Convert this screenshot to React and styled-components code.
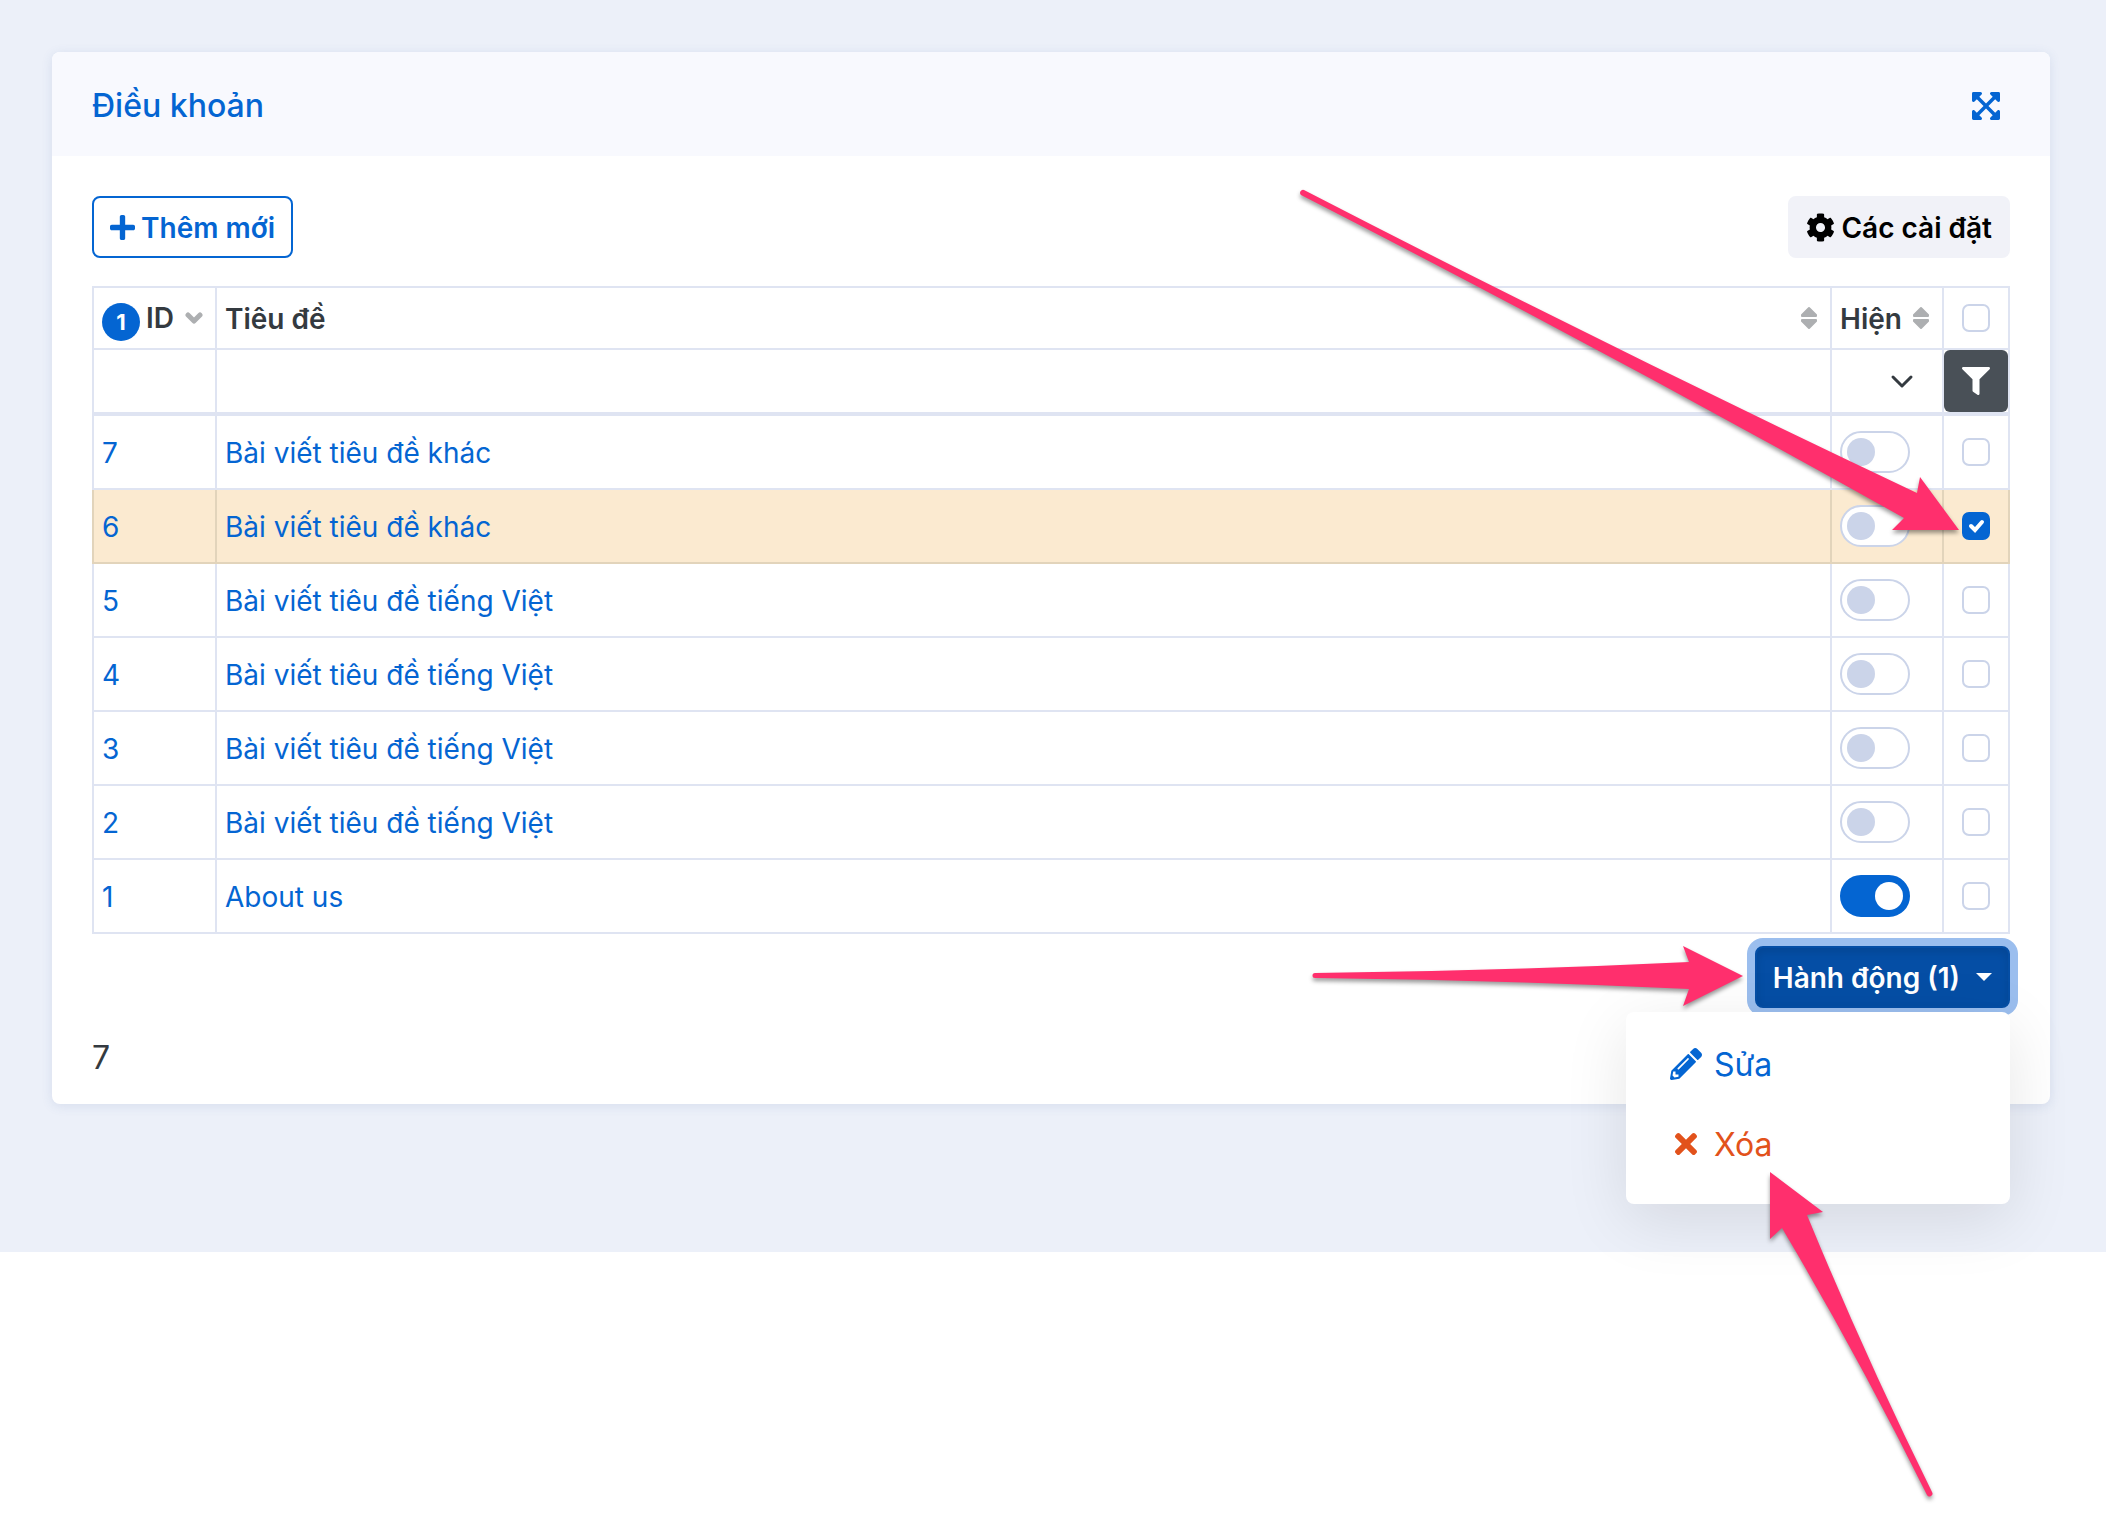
import { useState } from 'react'
import styled, { createGlobalStyle, css } from 'styled-components'
import { FaCog, FaExpandArrowsAlt, FaFilter, FaPencilAlt, FaPlus, FaTimes } from 'react-icons/fa'

const BLUE = '#0465d2'
const LINE = '#dfe4f2'
const CONTROL_LINE = '#cbd4e9'
const TEXT = '#343a40'

const articles = [
    { id: 7, title: 'Bài viết tiêu đề khác', visible: false },
    { id: 6, title: 'Bài viết tiêu đề khác', visible: false },
    { id: 5, title: 'Bài viết tiêu đề tiếng Việt', visible: false },
    { id: 4, title: 'Bài viết tiêu đề tiếng Việt', visible: false },
    { id: 3, title: 'Bài viết tiêu đề tiếng Việt', visible: false },
    { id: 2, title: 'Bài viết tiêu đề tiếng Việt', visible: false },
    { id: 1, title: 'About us', visible: true },
]

const GlobalStyle = createGlobalStyle`
    *, *::before, *::after {
        box-sizing: border-box;
    }

    body {
        margin: 0;
        background: #fff;
        color: ${TEXT};
        font: 400 32px/48px Inter, sans-serif;
    }

    button, input, select {
        font: inherit;
        color: inherit;
    }
`

const Page = styled.div`
    position: relative;
    min-height: 100vh;
`

const Main = styled.main`
    padding: 52px 56px 148px 52px;
    background: #ecf0f9;
`

const Card = styled.section`
    border-radius: 8px;
    background: #fff;
    box-shadow: 0 2px 12px rgba(60, 90, 160, .12);
`

const CardHeader = styled.header`
    display: flex;
    align-items: center;
    justify-content: space-between;
    height: 104px;
    padding: 4px 40px 0;
    border-radius: 8px 8px 0 0;
    background: #f8f9fe;
    color: ${BLUE};
`

const Title = styled.h1`
    margin: 0;
    font-size: 32px;
    font-weight: 500;
`

const IconButton = styled.button`
    display: flex;
    padding: 0 10px;
    border: 0;
    background: none;
    color: ${BLUE};
    cursor: pointer;

    svg {
        width: 28px;
        height: 32px;
    }
`

const CardBody = styled.div`
    padding: 40px 40px 22px;
`

const Toolbar = styled.div`
    display: flex;
    justify-content: space-between;
    margin-bottom: 28px;
`

/* Inter sits a little high in its line box, this centres the caps */
const Label = styled.span`
    display: inline-block;
    padding-top: 2px;
`

const variants = {
    outline: css`
        border-color: ${BLUE};
        background: #fff;
        color: ${BLUE};
    `,
    light: css`
        border-color: #f1f2f8;
        background: #f1f2f8;
        color: #000;
    `,
    active: css`
        border-color: #054ea5;
        background: #054ea5;
        color: #fff;
        box-shadow: inset 0 4px 8px rgba(0, 0, 0, .1), 0 0 0 8px #9bbeee;
    `,
}

const Button = styled.button`
    display: flex;
    align-items: center;
    gap: ${({ $gap }) => $gap ?? 6}px;
    height: 62px;
    padding: 0 16px;
    border: 2px solid;
    border-radius: 8px;
    font-size: 28px;
    font-weight: 600;
    line-height: 44px;
    white-space: nowrap;
    cursor: pointer;
    ${({ $variant }) => variants[$variant]}
`

const PlusIcon = styled(FaPlus)`
    width: 25px;
    height: 29px;
`

const Table = styled.table`
    width: 100%;
    table-layout: fixed;
    border-spacing: 0;
    border-top: 2px solid ${LINE};
    font-size: 28px;
    line-height: 44px;
`

const Col = styled.col`
    width: ${({ $width }) => $width}px;
`

const cell = css`
    padding: 0 8px;
    border: solid ${LINE};
    border-width: 0 2px 2px 0;
    text-align: left;

    &:first-child {
        border-left-width: 2px;
    }
`

const HeadCell = styled.th`
    ${cell}
    height: 62px;
    font-weight: 600;
`

const FilterCell = styled.td`
    ${cell}
    position: relative;
    height: 66px;
    padding: 0;
    border-bottom-width: 4px;
`

const Row = styled.tr`
    background: ${({ $selected }) => $selected ? '#fbead0' : '#fff'};

    td {
        border-color: ${({ $selected }) => $selected ? '#e2d4bb' : LINE};
    }
`

const Cell = styled.td`
    ${cell}
    height: 74px;
`

const HeadInner = styled.div`
    display: flex;
    align-items: center;
    justify-content: ${({ $center }) => $center ? 'center' : 'space-between'};
    padding-right: ${({ $center }) => $center ? 0 : 4}px;
`

const SortLabel = styled.span`
    display: flex;
    align-items: center;
    gap: 6px;
`

const Badge = styled.span`
    width: 38px;
    height: 38px;
    margin-top: 8px;
    border-radius: 50%;
    background: ${BLUE};
    color: #fff;
    font-size: 22px;
    font-weight: 700;
    line-height: 38px;
    text-align: center;
`

const FilterInput = styled.input`
    display: block;
    width: 100%;
    height: 62px;
    padding: 0 8px;
    border: 0;
    background: none;
`

const FilterSelect = styled.select`
    display: block;
    width: 100%;
    height: 62px;
    padding: 0 8px;
    border: 0;
    background: none;
    appearance: none;
`

const SelectArrow = styled.svg`
    position: absolute;
    top: 23px;
    right: 28px;
    pointer-events: none;
`

const FilterButton = styled.button`
    display: flex;
    align-items: center;
    justify-content: center;
    width: 100%;
    height: 62px;
    padding: 0;
    border: 0;
    border-radius: 6px;
    background: #495057;
    color: #fff;
    font-size: 28px;
    cursor: pointer;
`

const Link = styled.a`
    display: inline-block;
    padding-top: 2px;
    color: ${BLUE};
    text-decoration: none;
`

const CenterBox = styled.div`
    display: flex;
    justify-content: center;
`

const Checkbox = styled.input.attrs({ type: 'checkbox' })`
    width: 28px;
    height: 28px;
    margin: 0;
    border: 2px solid ${CONTROL_LINE};
    border-radius: 7px;
    background: #fff;
    appearance: none;
    cursor: pointer;

    &:checked {
        border-color: ${BLUE};
        background: ${BLUE} url("data:image/svg+xml,%3Csvg xmlns='http://www.w3.org/2000/svg' viewBox='0 0 24 24'%3E%3Cpath d='M7 12l4 4 7-8' fill='none' stroke='%23fff' stroke-width='4' stroke-linecap='round'/%3E%3C/svg%3E") center / 24px no-repeat;
    }
`

const Switch = styled.input.attrs({ type: 'checkbox', role: 'switch' })`
    display: block;
    width: 70px;
    height: 42px;
    margin: 0;
    padding: 5px;
    border: 2px solid ${CONTROL_LINE};
    border-radius: 21px;
    background: #fff;
    appearance: none;
    cursor: pointer;

    &::before {
        content: '';
        display: block;
        width: 28px;
        height: 28px;
        border-radius: 50%;
        background: ${CONTROL_LINE};
    }

    &:checked {
        border-color: ${BLUE};
        background: ${BLUE};
    }

    &:checked::before {
        margin-left: 28px;
        background: #fff;
    }
`

const Actions = styled.div`
    display: flex;
    justify-content: flex-end;
    margin: 12px 0 24px;
`

const Dropdown = styled.div`
    position: relative;
`

const Menu = styled.div`
    position: absolute;
    z-index: 1;
    top: 100%;
    right: 0;
    width: 384px;
    margin-top: 4px;
    padding: 12px 0 20px;
    border-radius: 8px;
    background: #fff;
    box-shadow: 0 16px 64px rgba(0, 0, 0, .1);
`

const MenuItem = styled.button`
    display: flex;
    align-items: center;
    gap: 8px;
    width: 100%;
    height: 80px;
    padding: 0 40px;
    border: 0;
    background: none;
    color: ${({ $danger }) => $danger ? '#e2521b' : BLUE};
    cursor: pointer;

    svg {
        width: 40px;
        height: 32px;
    }
`

const Total = styled.div`
    padding-top: 2px;
`

const Arrows = styled.svg`
    position: absolute;
    z-index: 2;
    top: 0;
    right: 0;
    pointer-events: none;
    filter: drop-shadow(0 3px 2px rgba(0, 0, 0, .4));
`

const SortIcon = () => (
    <svg width="18" height="24" viewBox="0 0 18 24" fill="#adafb1" stroke="#adafb1" strokeWidth="2" strokeLinejoin="round">
        <path d="M9 2 L16 9 V10 H2 V9 Z" />
        <path d="M9 22 L16 15 V14 H2 V15 Z" />
    </svg>
)

const SortDownIcon = () => (
    <svg width="18" height="24" viewBox="0 0 18 24" fill="none" stroke="#adafb1" strokeWidth="5" strokeLinecap="round" strokeLinejoin="round">
        <path d="M3 9 L9 15 L15 9" />
    </svg>
)

const App = () => {
    const [selected, setSelected] = useState([6])
    const [visible, setVisible] = useState(articles.filter(a => a.visible).map(a => a.id))
    const [menuOpen, setMenuOpen] = useState(true)

    const toggle = (list, setList, id) => {
        setList(list.includes(id) ? list.filter(x => x !== id) : [...list, id])
    }

    const allSelected = selected.length === articles.length

    return (
        <Page>
            <GlobalStyle />
            <Main>
                <Card>
                    <CardHeader>
                        <Title>Điều khoản</Title>
                        <IconButton aria-label="Toàn màn hình"><FaExpandArrowsAlt /></IconButton>
                    </CardHeader>
                    <CardBody>
                        <Toolbar>
                            <Button $variant="outline"><PlusIcon /><Label>Thêm mới</Label></Button>
                            <Button $variant="light"><FaCog size={29} /><Label>Các cài đặt</Label></Button>
                        </Toolbar>
                        <Table>
                            <colgroup>
                                <Col $width={125} />
                                <col />
                                <Col $width={112} />
                                <Col $width={66} />
                            </colgroup>
                            <thead>
                                <tr>
                                    <HeadCell>
                                        <HeadInner>
                                            <SortLabel><Badge>1</Badge>ID</SortLabel>
                                            <SortDownIcon />
                                        </HeadInner>
                                    </HeadCell>
                                    <HeadCell><HeadInner><Label>Tiêu đề</Label><SortIcon /></HeadInner></HeadCell>
                                    <HeadCell><HeadInner><Label>Hiện</Label><SortIcon /></HeadInner></HeadCell>
                                    <HeadCell>
                                        <HeadInner $center>
                                            <Checkbox
                                                aria-label="Chọn tất cả"
                                                checked={allSelected}
                                                onChange={() => setSelected(allSelected ? [] : articles.map(a => a.id))}
                                            />
                                        </HeadInner>
                                    </HeadCell>
                                </tr>
                                <tr>
                                    <FilterCell><FilterInput aria-label="ID" /></FilterCell>
                                    <FilterCell><FilterInput aria-label="Tiêu đề" /></FilterCell>
                                    <FilterCell>
                                        <FilterSelect aria-label="Hiện"><option value="" /></FilterSelect>
                                        <SelectArrow width="24" height="16" viewBox="0 0 24 16" fill="none" stroke={TEXT} strokeWidth="3" strokeLinecap="round" strokeLinejoin="round">
                                            <path d="M3 4 L12 13 L21 4" />
                                        </SelectArrow>
                                    </FilterCell>
                                    <FilterCell><FilterButton aria-label="Lọc"><FaFilter /></FilterButton></FilterCell>
                                </tr>
                            </thead>
                            <tbody>
                                {articles.map(({ id, title }) => (
                                    <Row key={id} $selected={selected.includes(id)}>
                                        <Cell><Link href={`#${id}`}>{id}</Link></Cell>
                                        <Cell><Link href={`#${id}`}>{title}</Link></Cell>
                                        <Cell>
                                            <Switch
                                                aria-label={`Hiện ${id}`}
                                                checked={visible.includes(id)}
                                                onChange={() => toggle(visible, setVisible, id)}
                                            />
                                        </Cell>
                                        <Cell>
                                            <CenterBox>
                                                <Checkbox
                                                    aria-label={`Chọn ${id}`}
                                                    checked={selected.includes(id)}
                                                    onChange={() => toggle(selected, setSelected, id)}
                                                />
                                            </CenterBox>
                                        </Cell>
                                    </Row>
                                ))}
                            </tbody>
                        </Table>
                        <Actions>
                            <Dropdown>
                                <Button $variant="active" $gap={16} aria-expanded={menuOpen} onClick={() => setMenuOpen(!menuOpen)}>
                                    <Label>Hành động ({selected.length})</Label>
                                    <svg width="16" height="8" viewBox="0 0 16 8" fill="currentColor"><path d="M0 0 H16 L8 8 Z" /></svg>
                                </Button>
                                {menuOpen && (
                                    <Menu>
                                        <MenuItem><FaPencilAlt /><Label>Sửa</Label></MenuItem>
                                        <MenuItem $danger><FaTimes /><Label>Xóa</Label></MenuItem>
                                    </Menu>
                                )}
                            </Dropdown>
                        </Actions>
                        <Total>{articles.length}</Total>
                    </CardBody>
                </Card>
            </Main>
            <Arrows width="816" height="1538" viewBox="1290 0 816 1538" fill="#ff2f6d" aria-hidden="true">
                <path d="M1304 190 Q1610 348 1917 493 L1920 477 L1959 530 L1892 530 L1904 518 Q1602 349 1301 195 A3 3 0 0 1 1304 190 Z" />
                <path d="M1315 973 Q1501 971 1689 962 L1683 946 L1743 976 L1683 1006 L1689 989 Q1501 980 1315 978 A2.500 2.500 0 0 1 1315 973 Z" />
                <path d="M1770 1172 L1823 1212 L1807 1215 Q1865 1356 1932 1492 A2.500 2.500 0 0 1 1927 1495 Q1859 1358 1782 1228 L1770 1239 Z" />
            </Arrows>
        </Page>
    )
}

export default App
